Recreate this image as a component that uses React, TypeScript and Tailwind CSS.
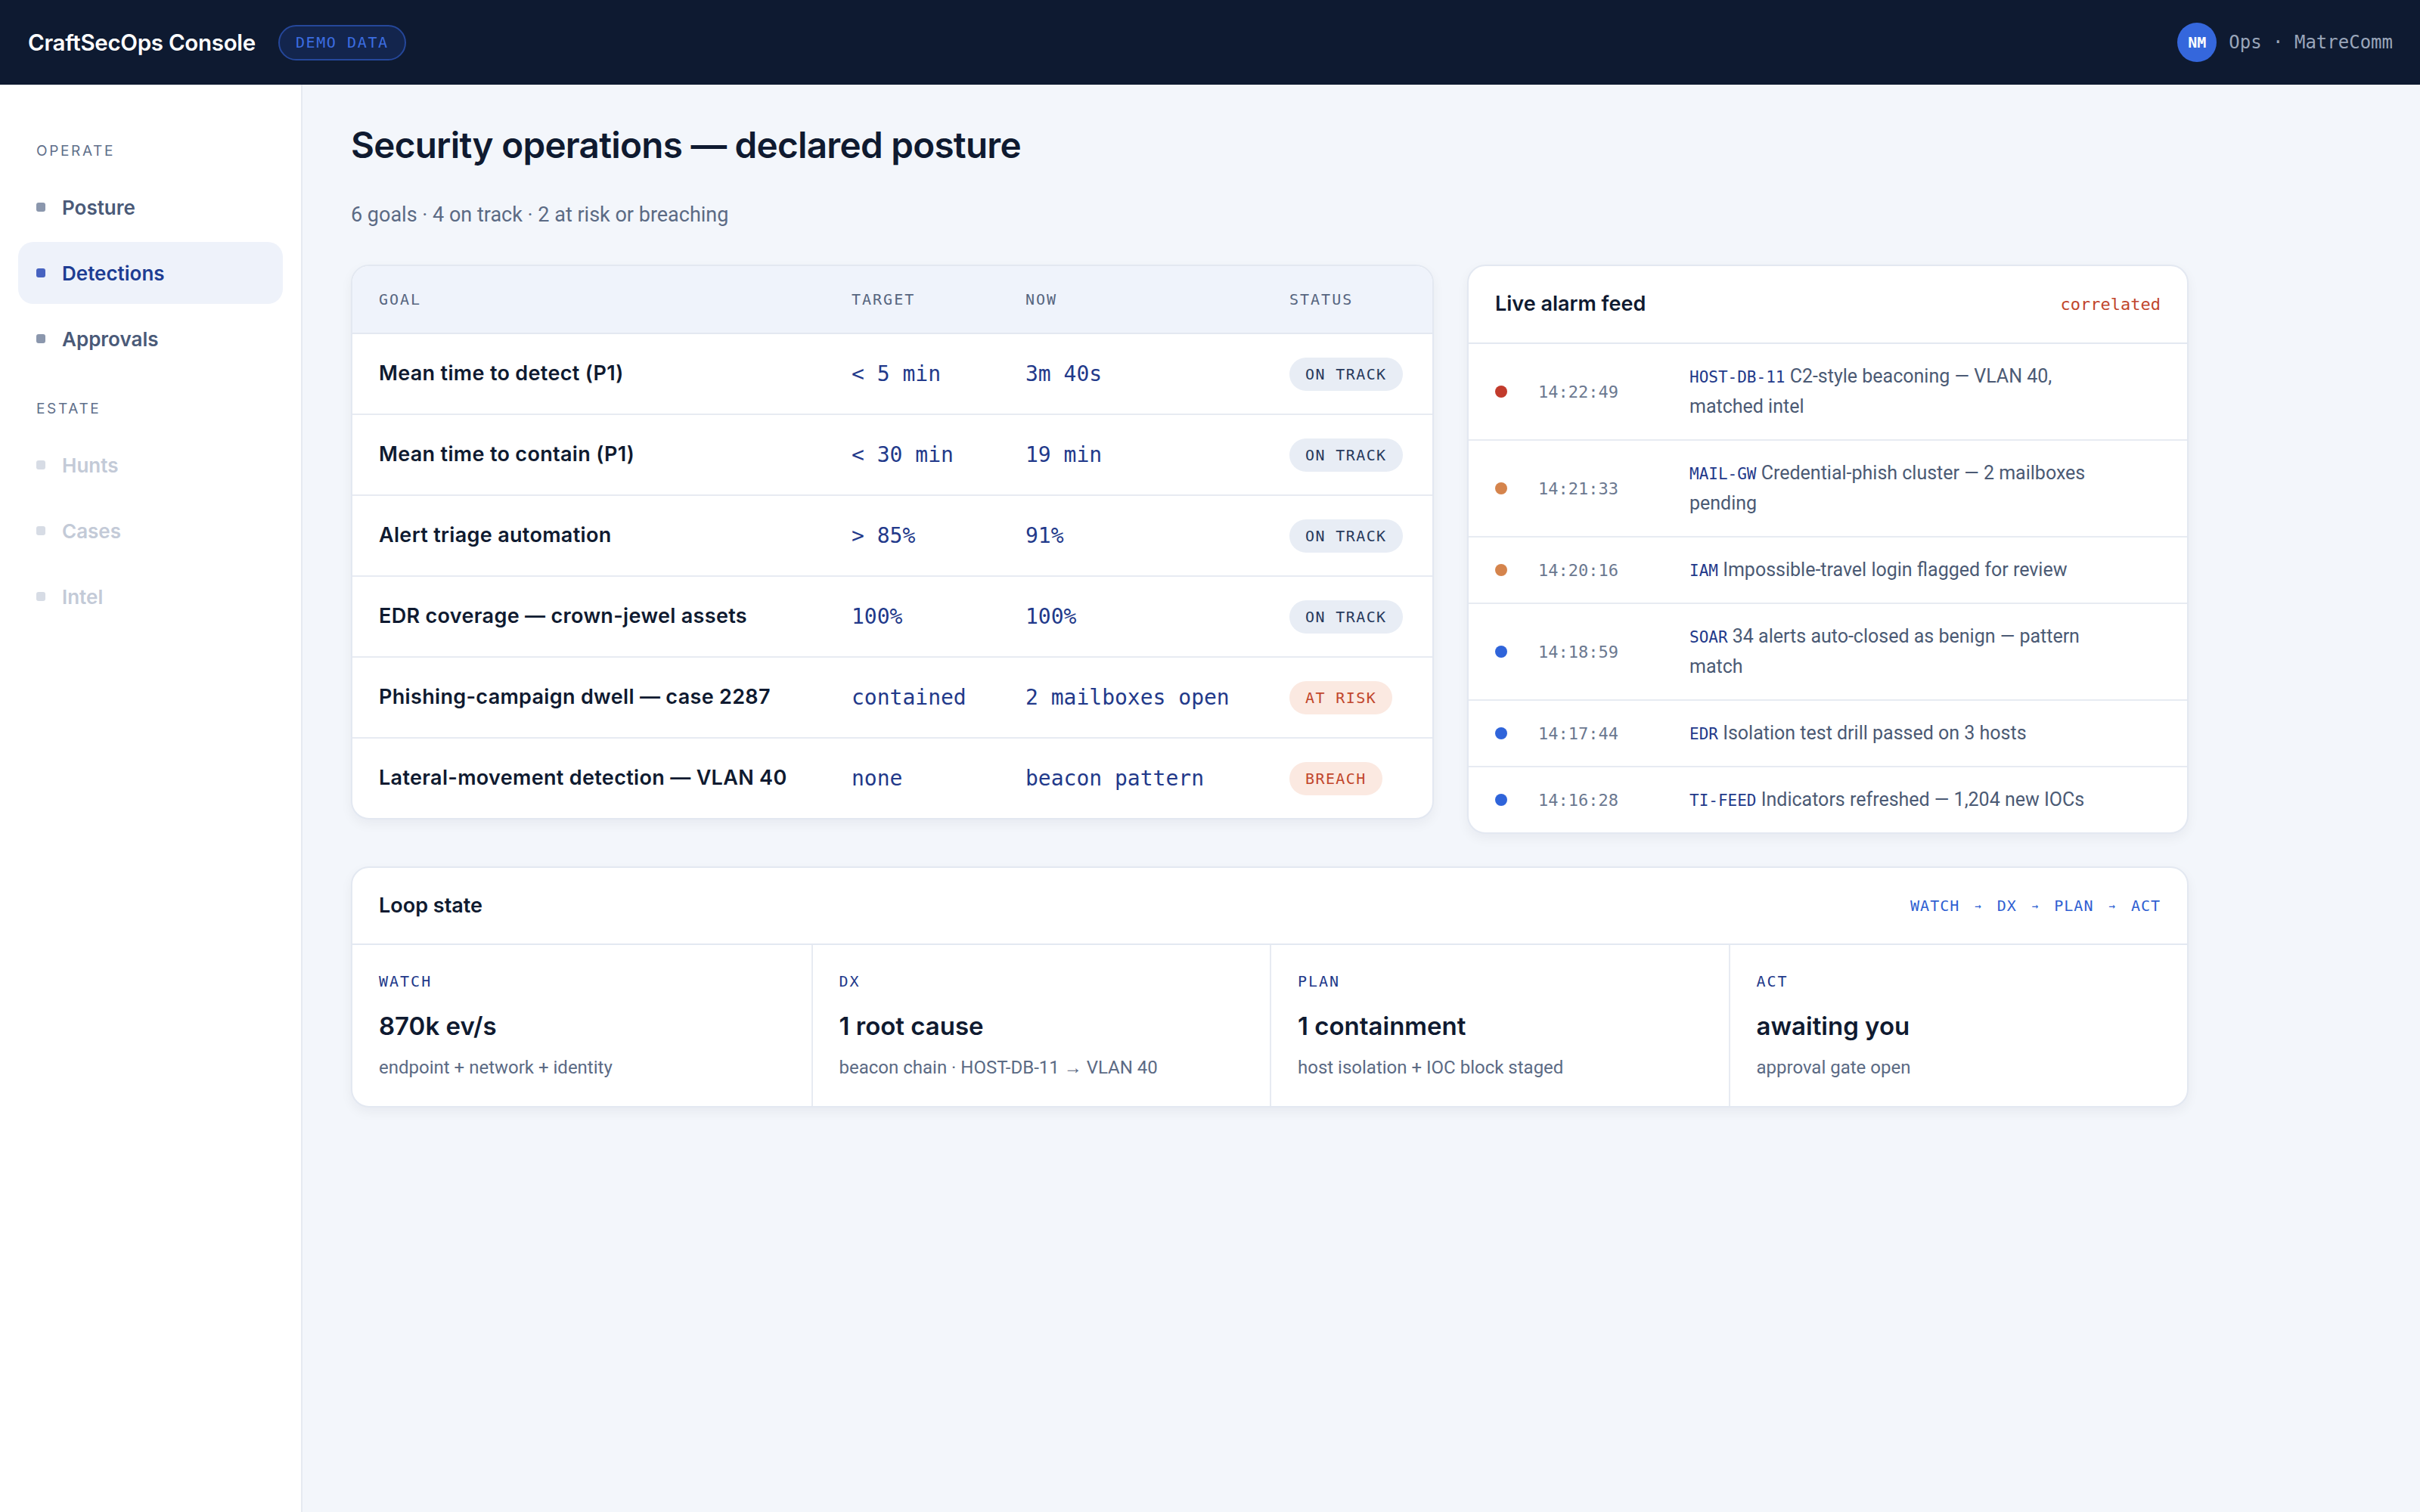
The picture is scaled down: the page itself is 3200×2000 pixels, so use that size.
import React from "react";

const MONO = { fontFamily: '"DejaVu Sans Mono", "Liberation Mono", monospace' } as const;
const HEAD = { fontFamily: 'Inter, "Noto Sans", sans-serif' } as const;
const BODY = { fontFamily: 'Roboto, "Noto Sans", sans-serif' } as const;

type Goal = { goal: string; target: string; now: string; status: "ON TRACK" | "AT RISK" | "BREACH" };

const goals: Goal[] = [
  { goal: "Mean time to detect (P1)", target: "< 5 min", now: "3m 40s", status: "ON TRACK" },
  { goal: "Mean time to contain (P1)", target: "< 30 min", now: "19 min", status: "ON TRACK" },
  { goal: "Alert triage automation", target: "> 85%", now: "91%", status: "ON TRACK" },
  { goal: "EDR coverage — crown-jewel assets", target: "100%", now: "100%", status: "ON TRACK" },
  { goal: "Phishing-campaign dwell — case 2287", target: "contained", now: "2 mailboxes open", status: "AT RISK" },
  { goal: "Lateral-movement detection — VLAN 40", target: "none", now: "beacon pattern", status: "BREACH" },
];

type Alarm = { color: string; time: string; src: string; msg: string };
const alarms: Alarm[] = [
  { color: "bg-[#c23b2c]", time: "14:22:49", src: "HOST-DB-11", msg: "C2-style beaconing — VLAN 40, matched intel" },
  { color: "bg-[#d5844c]", time: "14:21:33", src: "MAIL-GW", msg: "Credential-phish cluster — 2 mailboxes pending" },
  { color: "bg-[#d5844c]", time: "14:20:16", src: "IAM", msg: "Impossible-travel login flagged for review" },
  { color: "bg-[#2f64da]", time: "14:18:59", src: "SOAR", msg: "34 alerts auto-closed as benign — pattern match" },
  { color: "bg-[#2f64da]", time: "14:17:44", src: "EDR", msg: "Isolation test drill passed on 3 hosts" },
  { color: "bg-[#2f64da]", time: "14:16:28", src: "TI-FEED", msg: "Indicators refreshed — 1,204 new IOCs" },
];

const loop = [
  { label: "WATCH", value: "870k ev/s", sub: "endpoint + network + identity" },
  { label: "DX", value: "1 root cause", sub: "beacon chain · HOST-DB-11 → VLAN 40" },
  { label: "PLAN", value: "1 containment", sub: "host isolation + IOC block staged" },
  { label: "ACT", value: "awaiting you", sub: "approval gate open" },
];

function StatusPill({ s }: { s: Goal["status"] }) {
  const cls = s === "ON TRACK" ? "bg-[#e8edf5] text-[#27395c]" : "bg-[#fbe9e1] text-[#c1462b]";
  return (
    <span
      style={MONO}
      className={`inline-flex items-center h-[44px] px-[21px] rounded-full text-[20px] tracking-[0.07em] ${cls}`}
    >
      {s}
    </span>
  );
}

function NavItem({ label, state }: { label: string; state: "normal" | "active" | "disabled" }) {
  const wrap = state === "active" ? "bg-[#eef2fa]" : "";
  const text =
    state === "active" ? "text-[#1e3d93]" : state === "disabled" ? "text-[#c3cad7]" : "text-[#4a5a78]";
  const dot = state === "active" ? "bg-[#4763c0]" : state === "disabled" ? "bg-[#d7dce5]" : "bg-[#8b97ad]";
  return (
    <div className={`flex items-center h-[82px] rounded-[20px] pl-[24px] ${wrap}`}>
      <span className={`w-[12px] h-[12px] rounded-[3px] ${dot}`} />
      <span style={HEAD} className={`ml-[22px] text-[26px] font-semibold ${text}`}>
        {label}
      </span>
    </div>
  );
}

function Arrow() {
  return <span className="text-[14px] text-[#2f5fd2]">→</span>;
}

export default function App() {
  return (
    <div className="w-[3200px] h-[2000px] flex flex-col bg-[#f3f6fb] overflow-hidden">
      {/* Top bar */}
      <header className="h-[112px] shrink-0 bg-[#0e1a31] flex items-center justify-between pl-[37px] pr-[36px]">
        <div className="flex items-center">
          <span style={HEAD} className="text-white text-[29.5px] font-semibold tracking-[-0.01em]">
            CraftSecOps Console
          </span>
          <span
            style={MONO}
            className="ml-[30px] h-[47px] px-[21px] inline-flex items-center rounded-full border-2 border-[#25479a] bg-[#13254d] text-[#3c6de0] text-[20px] tracking-[0.08em]"
          >
            DEMO DATA
          </span>
        </div>
        <div className="flex items-center">
          <span
            style={MONO}
            className="w-[52px] h-[52px] rounded-full bg-[#3567dc] text-white text-[20px] font-bold flex items-center justify-center"
          >
            NM
          </span>
          <span style={MONO} className="ml-[16px] text-[24px] text-[#9aa6ba]">
            Ops · MatreComm
          </span>
        </div>
      </header>

      <div className="flex flex-1">
        {/* Sidebar */}
        <aside className="w-[400px] shrink-0 bg-white border-r-2 border-[#e6eaf1] pt-[76px] px-[24px]">
          <div style={HEAD} className="pl-[24px] h-[24px] leading-[24px] text-[19px] tracking-[0.14em] text-[#5f6f8a]">
            OPERATE
          </div>
          <div className="mt-[21px] flex flex-col gap-[5px]">
            <NavItem label="Posture" state="normal" />
            <NavItem label="Detections" state="active" />
            <NavItem label="Approvals" state="normal" />
          </div>
          <div style={HEAD} className="mt-[40px] pl-[24px] h-[24px] leading-[24px] text-[19px] tracking-[0.14em] text-[#5f6f8a]">
            ESTATE
          </div>
          <div className="mt-[21px] flex flex-col gap-[5px]">
            <NavItem label="Hunts" state="disabled" />
            <NavItem label="Cases" state="disabled" />
            <NavItem label="Intel" state="disabled" />
          </div>
        </aside>

        {/* Main */}
        <main className="flex-1 pl-[64px] pt-[52px]">
          <div className="w-[2430px]">
            <h1 style={HEAD} className="text-[47.6px] leading-[56px] font-semibold text-[#0f1a30] tracking-[-0.015em]">
              Security operations — declared posture
            </h1>
            <p style={BODY} className="mt-[44px] text-[27px] leading-[40px] text-[#5b6a84]">
              6 goals · 4 on track · 2 at risk or breaching
            </p>

            <div className="mt-[46px] grid grid-cols-[1432px_954px] gap-[44px] items-start">
              {/* Goals table */}
              <div className="bg-white rounded-[24px] border-2 border-[#e3e8f1] overflow-hidden shadow-[0_6px_16px_rgba(15,26,48,0.05)]">
                <div
                  style={MONO}
                  className="h-[90px] bg-[#eff3fb] border-b-2 border-[#e3e8f1] grid grid-cols-[625px_230px_349px_1fr] items-center pl-[35px] text-[20px] tracking-[0.1em] text-[#56657f]"
                >
                  <span>GOAL</span>
                  <span>TARGET</span>
                  <span>NOW</span>
                  <span>STATUS</span>
                </div>
                {goals.map((g, i) => (
                  <div
                    key={g.goal}
                    className={`h-[105px] grid grid-cols-[625px_230px_349px_1fr] items-center pl-[35px] ${
                      i < goals.length - 1 ? "border-b-2 border-[#e7ebf2] box-content" : ""
                    }`}
                  >
                    <span style={HEAD} className="text-[27px] font-semibold text-[#0f1a30] tracking-[0.012em]">
                      {g.goal}
                    </span>
                    <span style={MONO} className="text-[28px] text-[#22398a]">
                      {g.target}
                    </span>
                    <span style={MONO} className="text-[28px] text-[#22398a]">
                      {g.now}
                    </span>
                    <span>
                      <StatusPill s={g.status} />
                    </span>
                  </div>
                ))}
              </div>

              {/* Alarm feed */}
              <div className="bg-white rounded-[24px] border-2 border-[#e3e8f1] overflow-hidden shadow-[0_6px_16px_rgba(15,26,48,0.05)]">
                <div className="h-[101px] border-b-2 border-[#e3e8f1] box-content flex items-center justify-between px-[35px]">
                  <span style={HEAD} className="text-[27px] font-semibold text-[#0f1a30]">
                    Live alarm feed
                  </span>
                  <span style={MONO} className="text-[22px] text-[#c1462b]">
                    correlated
                  </span>
                </div>
                {alarms.map((a, i) => (
                  <div
                    key={a.time}
                    className={`flex items-center py-[23px] pl-[35px] ${
                      i < alarms.length - 1 ? "border-b-2 border-[#e7ebf2]" : ""
                    }`}
                  >
                    <span className={`w-[16px] h-[16px] rounded-full shrink-0 ${a.color}`} />
                    <span style={MONO} className="ml-[41px] w-[200px] shrink-0 text-[22px] text-[#6b7890]">
                      {a.time}
                    </span>
                    <span style={BODY} className="w-[562px] text-[25px] leading-[40px] text-[#4b5a74]">
                      <span style={MONO} className="text-[21px] leading-none text-[#22398a]">
                        {a.src}
                      </span>{" "}
                      {a.msg}
                    </span>
                  </div>
                ))}
              </div>
            </div>

            {/* Loop state */}
            <div className="mt-[43px] bg-white rounded-[24px] border-2 border-[#e3e8f1] overflow-hidden shadow-[0_6px_16px_rgba(15,26,48,0.05)]">
              <div className="h-[100px] border-b-2 border-[#e3e8f1] box-content flex items-center justify-between px-[35px]">
                <span style={HEAD} className="text-[27px] font-semibold text-[#0f1a30]">
                  Loop state
                </span>
                <span style={MONO} className="flex items-center gap-[20px] text-[20px] tracking-[0.05em] text-[#2f5fd2]">
                  <span>WATCH</span>
                  <Arrow />
                  <span>DX</span>
                  <Arrow />
                  <span>PLAN</span>
                  <Arrow />
                  <span>ACT</span>
                </span>
              </div>
              <div className="grid grid-cols-4">
                {loop.map((l, i) => (
                  <div
                    key={l.label}
                    className={`pl-[35px] pt-[34px] pb-[35px] ${i > 0 ? "border-l-2 border-[#e7ebf2]" : ""}`}
                  >
                    <div style={MONO} className="text-[20px] leading-[28px] tracking-[0.1em] text-[#22398a]">
                      {l.label}
                    </div>
                    <div style={HEAD} className="mt-[25px] text-[33px] leading-[40px] font-semibold text-[#0f1a30]">
                      {l.value}
                    </div>
                    <div style={BODY} className="mt-[19px] text-[24px] leading-[32px] text-[#5b6a84]">
                      {l.sub}
                    </div>
                  </div>
                ))}
              </div>
            </div>
          </div>
        </main>
      </div>
    </div>
  );
}
